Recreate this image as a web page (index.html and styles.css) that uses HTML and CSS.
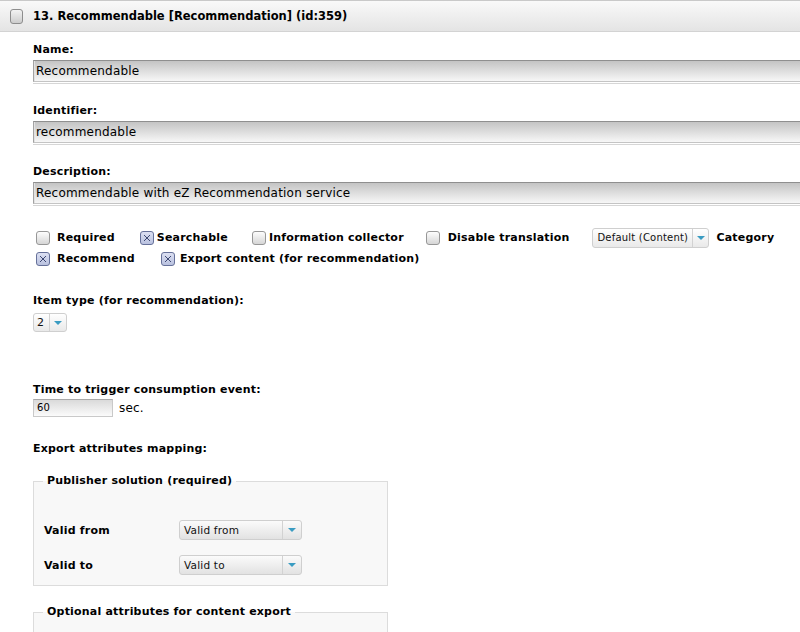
FILE: index.html
```html
<!DOCTYPE html>
<html>
<head>
<meta charset="utf-8">
<link rel="stylesheet" href="styles.css">
</head>
<body>
<div class="page">
  <div class="header">
    <span class="cb cb-hdr"></span>
    <span class="title">13. Recommendable [Recommendation] (id:359)</span>
  </div>
  <div class="content">
    <div class="field first">
      <div class="lbl">Name:</div>
      <div class="text">Recommendable</div>
    </div>
    <div class="field">
      <div class="lbl">Identifier:</div>
      <div class="text">recommendable</div>
    </div>
    <div class="field">
      <div class="lbl">Description:</div>
      <div class="text">Recommendable with eZ Recommendation service</div>
    </div>

    <div class="flags">
      <div class="row">
        <span class="cb"></span><span class="flag g7">Required</span>
        <span class="cb checked m25"><svg viewBox="0 0 14 14"><path d="M3.5 3.5 L10.5 10.5 M10.5 3.5 L3.5 10.5"/></svg></span><span class="flag g3">Searchable</span>
        <span class="cb m24"></span><span class="flag g3">Information collector</span>
        <span class="cb m22"></span><span class="flag g8">Disable translation</span>
        <span class="sel sel-cat m23"><span class="sel-txt">Default (Content)</span><span class="sel-arr"><i></i></span></span>
        <span class="flag g7">Category</span>
      </div>
      <div class="row">
        <span class="cb checked"><svg viewBox="0 0 14 14"><path d="M3.5 3.5 L10.5 10.5 M10.5 3.5 L3.5 10.5"/></svg></span><span class="flag g7">Recommend</span>
        <span class="cb checked m26"><svg viewBox="0 0 14 14"><path d="M3.5 3.5 L10.5 10.5 M10.5 3.5 L3.5 10.5"/></svg></span><span class="flag g5">Export content (for recommendation)</span>
      </div>
    </div>

    <div class="item-type">
      <div class="lbl">Item type (for recommendation):</div>
      <span class="sel sel-num"><span class="sel-txt">2</span><span class="sel-arr"><i></i></span></span>
    </div>

    <div class="time">
      <div class="lbl">Time to trigger consumption event:</div>
      <div class="time-row">
        <span class="small-input">60</span>
        <span class="unit">sec.</span>
      </div>
    </div>

    <div class="lbl export-lbl">Export attributes mapping:</div>

    <fieldset class="box">
      <legend>Publisher solution (required)</legend>
      <div class="map-row">
        <span class="map-lbl">Valid from</span>
        <span class="sel sel-map"><span class="sel-txt">Valid from</span><span class="sel-arr"><i></i></span></span>
      </div>
      <div class="map-row">
        <span class="map-lbl">Valid to</span>
        <span class="sel sel-map"><span class="sel-txt">Valid to</span><span class="sel-arr"><i></i></span></span>
      </div>
    </fieldset>

    <fieldset class="box box2">
      <legend>Optional attributes for content export</legend>
      <div class="spacer"></div>
    </fieldset>
  </div>
</div>
</body>
</html>
```

FILE: styles.css
```css
html, body {
  margin: 0;
  padding: 0;
  background: #fff;
  overflow: hidden;
}
.page {
  width: 800px;
  height: 632px;
  overflow: hidden;
  font-family: "DejaVu Sans", sans-serif;
  color: #000;
  letter-spacing: 0.2px;
}
.header {
  height: 30px;
  border-top: 1px solid #c9c9c9;
  border-bottom: 1px solid #d3d3d3;
  background: linear-gradient(#f9f9f9, #e4e4e4);
  display: flex;
  align-items: center;
  padding-left: 10px;
}
.title {
  font-weight: bold;
  font-size: 11.5px;
  letter-spacing: 0;
  margin-left: 10px;
}
.cb {
  display: inline-block;
  box-sizing: border-box;
  width: 14px;
  height: 14px;
  border: 1px solid #979797;
  border-radius: 3px;
  background: linear-gradient(#fdfdfd, #d6d6d6);
  flex: none;
}
.cb-hdr {
  width: 13px;
  height: 15px;
  border-color: #8d8d8d;
  background: linear-gradient(#f3f3f3, #cdcdcd);
  margin-top: 1px;
}
.cb.checked {
  border-color: #66719a;
  background: linear-gradient(#dce0f2, #b9c1df);
}
.cb svg {
  display: block;
  width: 12px;
  height: 12px;
}
.cb svg path {
  stroke: #34406a;
  stroke-width: 1.1;
  fill: none;
}
.content {
  padding-left: 33px;
}
.lbl {
  font-weight: bold;
  font-size: 11px;
  line-height: 14px;
  white-space: nowrap;
}
.field {
  margin-top: 22px;
}
.field.first {
  margin-top: 11px;
}
.text {
  margin-top: 3px;
  box-sizing: border-box;
  width: 800px;
  height: 22px;
  border-top: 1px solid #8f8f8f;
  border-left: 1px solid #a3a3a3;
  border-bottom: 1px solid #c4c4c4;
  border-right: 1px solid #a3a3a3;
  background: linear-gradient(#c4c4c4, #f7f7f7);
  box-shadow: 0 1px 0 #fff, 0 2px 0 #d6d6d6, inset 1px 0 0 #e2e2e2;
  font-size: 12px;
  line-height: 20px;
  padding-left: 2px;
  white-space: nowrap;
}
.flags {
  margin-top: 23px;
}
.row {
  display: flex;
  align-items: center;
  height: 21px;
  padding-left: 3px;
}
.flag {
  font-weight: bold;
  font-size: 11px;
  white-space: nowrap;
}
.g3 { margin-left: 3px; }
.g5 { margin-left: 5px; }
.g7 { margin-left: 7px; }
.g8 { margin-left: 8px; }
.m22 { margin-left: 22px; }
.m23 { margin-left: 23px; }
.m24 { margin-left: 24px; }
.m25 { margin-left: 25px; }
.m26 { margin-left: 26px; }

.sel {
  display: inline-flex;
  box-sizing: border-box;
  height: 20px;
  border: 1px solid #cfcfcf;
  border-radius: 3px;
  background: linear-gradient(#ffffff, #e9e9e9);
  font-size: 10px;
  color: #111;
  align-items: stretch;
  flex: none;
}
.sel-txt {
  flex: 1;
  display: flex;
  align-items: center;
  padding-left: 4px;
  white-space: nowrap;
  overflow: hidden;
}
.sel-arr {
  border-left: 1px solid #d2d2d2;
  display: flex;
  align-items: center;
  justify-content: center;
}
.sel-arr i {
  display: block;
  width: 0;
  height: 0;
  border-top: 4px solid #3a9cc2;
  border-left: 4px solid transparent;
  border-right: 4px solid transparent;
}
.sel-cat {
  width: 117px;
}
.sel-cat .sel-arr { width: 15px; }
.sel-num {
  width: 34px;
  height: 19px;
  margin-top: 5px;
  font-size: 11px;
}
.sel-num .sel-txt { padding-left: 3px; }
.sel-num .sel-arr { width: 16px; }
.sel-map {
  width: 123px;
  font-size: 10.5px;
  background: linear-gradient(#fbfbfb, #e2e2e2);
}
.sel-map .sel-txt { padding-left: 4px; }
.sel-map .sel-arr { width: 18px; }

.item-type {
  margin-top: 25px;
}
.item-type .sel { display: flex; }
.time {
  margin-top: 51px;
}
.time-row {
  display: flex;
  align-items: center;
  margin-top: 2px;
}
.small-input {
  box-sizing: border-box;
  width: 80px;
  height: 18px;
  border: 1px solid #c9c9c9;
  border-top-color: #a9a9a9;
  background: linear-gradient(#dadada, #fbfbfb);
  font-size: 10px;
  line-height: 16px;
  padding-left: 3px;
}
.unit {
  font-size: 12px;
  margin-left: 6px;
}
.export-lbl {
  margin-top: 25px;
}
.box {
  margin: 18px 0 0 0;
  box-sizing: border-box;
  width: 355px;
  border: 1px solid #dcdcdc;
  background: #f8f8f8;
  padding: 0 10px 10px 10px;
}
.box legend {
  font-weight: bold;
  font-size: 11px;
  line-height: 14px;
  padding: 0 4px;
  margin-left: -1px;
}
.map-row {
  display: flex;
  align-items: center;
  height: 20px;
  margin-top: 15px;
}
.map-row:first-of-type {
  margin-top: 32px;
}
.map-lbl {
  width: 135px;
  font-weight: bold;
  font-size: 11px;
}
.box2 {
  margin-top: 19px;
}
.spacer {
  height: 60px;
}
```
